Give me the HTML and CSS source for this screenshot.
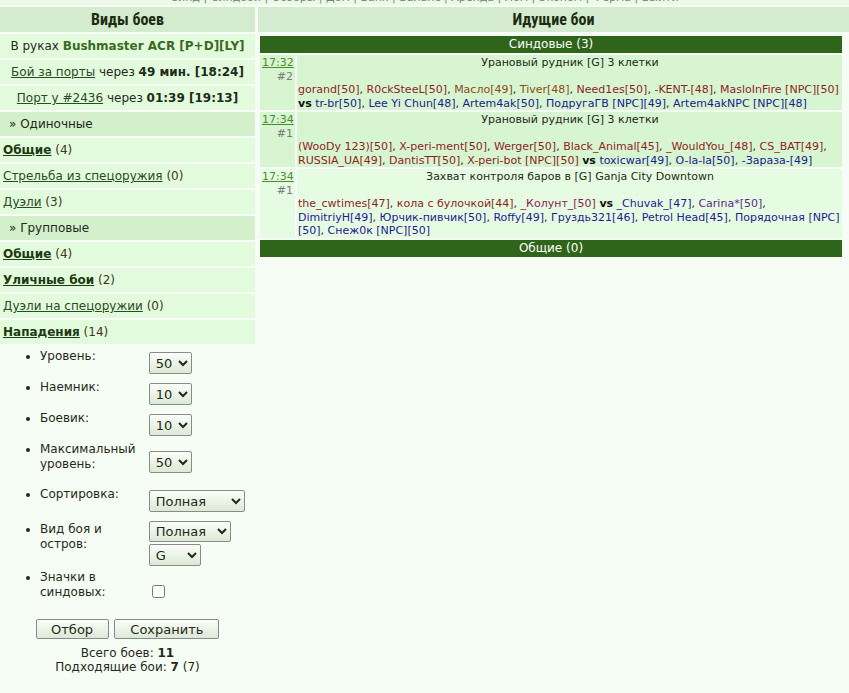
FILE: index.html
```html
<!DOCTYPE html>
<html lang="ru">
<head>
  <meta charset="UTF-8" />
  <title>Бои</title>
  <link rel="stylesheet" href="styles.css">
</head>
<body>
  <div class="topnav">
    <a href="#">Синд</a> | <a href="#">Синдбои</a> | <a href="#">Обзоры</a> | <a href="#">Дом</a> | <a href="#">Банк</a> | <a href="#">Баланс</a> | <a href="#">Аренда</a> | <a href="#">Лом</a> | <a href="#">Эконом</a> | <a href="#">Ферма</a> | <a href="#">Выйти</a>
  </div>

  <div class="layout">
    <!-- left: battle types -->
    <div class="side">
      <div class="col-head">Виды боев</div>
      <div class="row row-c">В руках <b class="weapon">Bushmaster ACR [P+D][LY]</b></div>
      <div class="row row-c"><a href="#">Бой за порты</a> через <b>49 мин. [18:24]</b></div>
      <div class="row row-c"><a href="#">Порт у #2436</a> через <b>01:39 [19:13]</b></div>
      <div class="row section">» Одиночные</div>
      <div class="row"><a href="#" class="strong">Общие</a> <span class="cnt">(4)</span></div>
      <div class="row"><a href="#">Стрельба из спецоружия</a> <span class="cnt">(0)</span></div>
      <div class="row"><a href="#">Дуэли</a> <span class="cnt">(3)</span></div>
      <div class="row section">» Групповые</div>
      <div class="row"><a href="#" class="strong">Общие</a> <span class="cnt">(4)</span></div>
      <div class="row"><a href="#" class="strong">Уличные бои</a> <span class="cnt">(2)</span></div>
      <div class="row"><a href="#">Дуэли на спецоружии</a> <span class="cnt">(0)</span></div>
      <div class="row"><a href="#" class="strong">Нападения</a> <span class="cnt">(14)</span></div>

      <ul class="filters">
        <li>
          <span class="lbl">Уровень:</span>
          <span class="ctl"><select class="sel-s"><option>50</option></select></span>
        </li>
        <li>
          <span class="lbl">Наемник:</span>
          <span class="ctl"><select class="sel-s"><option>10</option></select></span>
        </li>
        <li>
          <span class="lbl">Боевик:</span>
          <span class="ctl"><select class="sel-s"><option>10</option></select></span>
        </li>
        <li class="two">
          <span class="lbl">Максимальный уровень:</span>
          <span class="ctl"><select class="sel-s"><option>50</option></select></span>
        </li>
        <li class="sort">
          <span class="lbl">Сортировка:</span>
          <span class="ctl"><select class="sel-l"><option>Полная</option></select></span>
        </li>
        <li class="kind">
          <span class="lbl">Вид боя и остров:</span>
          <span class="ctl ctl-col">
            <select class="sel-m"><option>Полная</option></select>
            <select class="sel-g"><option>G</option></select>
          </span>
        </li>
        <li class="icons">
          <span class="lbl">Значки в синдовых:</span>
          <span class="ctl"><input type="checkbox" /></span>
        </li>
      </ul>

      <div class="btns">
        <button class="btn btn-pick">Отбор</button>
        <button class="btn btn-save">Сохранить</button>
      </div>
      <div class="totals">
        Всего боев: <b>11</b><br>
        Подходящие бои: <b>7</b> (7)
      </div>
    </div>

    <!-- right: running battles -->
    <div class="main">
      <div class="col-head">Идущие бои</div>
      <div class="battles">
        <div class="group">Синдовые (3)</div>

        <div class="battle">
          <div class="when"><a href="#">17:32</a><br><span class="num">#2</span></div>
          <div class="info">
            <div class="title">Урановый рудник [G] 3 клетки</div>
            <div class="teams">
              <span class="t1">gorand[50]</span>, <span class="t1">R0ckSteeL[50]</span>, <span class="t1b">Масло[49]</span>, <span class="t1b">Tiver[48]</span>, <span class="t1">Need1es[50]</span>, <span class="t1">-KENT-[48]</span>, <span class="t1">MasloInFire [NPC][50]</span>
              <b>vs</b> <span class="t2">tr-br[50]</span>, <span class="t2">Lee Yi Chun[48]</span>, <span class="t2">Artem4ak[50]</span>, <span class="t2">ПодругаГВ [NPC][49]</span>, <span class="t2">Artem4akNPC [NPC][48]</span>
            </div>
          </div>
        </div>

        <div class="battle">
          <div class="when"><a href="#">17:34</a><br><span class="num">#1</span></div>
          <div class="info">
            <div class="title">Урановый рудник [G] 3 клетки</div>
            <div class="teams">
              <span class="t1">(WooDy 123)[50]</span>, <span class="t1">X-peri-ment[50]</span>, <span class="t1">Werger[50]</span>, <span class="t1">Black_Animal[45]</span>, <span class="t1">_WouldYou_[48]</span>, <span class="t1">CS_BAT[49]</span>, <span class="t1">RUSSIA_UA[49]</span>, <span class="t1">DantisTT[50]</span>, <span class="t1">X-peri-bot [NPC][50]</span> <b>vs</b> <span class="t2">toxicwar[49]</span>, <span class="t2">O-la-la[50]</span>, <span class="t2">-Зараза-[49]</span>
            </div>
          </div>
        </div>

        <div class="battle battle-lt">
          <div class="when"><a href="#">17:34</a><br><span class="num">#1</span></div>
          <div class="info">
            <div class="title">Захват контроля баров в [G] Ganja City Downtown</div>
            <div class="teams">
              <span class="t1">the_cwtimes[47]</span>, <span class="t1">кола с булочкой[44]</span>, <span class="t1p">_Колунт_[50]</span> <b>vs</b> <span class="t2">_Chuvak_[47]</span>, <span class="t2p">Carina*[50]</span>, <span class="t2">DimitriyH[49]</span>, <span class="t2">Юрчик-пивчик[50]</span>, <span class="t2">Roffy[49]</span>, <span class="t2">Груздь321[46]</span>, <span class="t2">Petrol Head[45]</span>, <span class="t2">Порядочная [NPC][50]</span>, <span class="t2">Снеж0к [NPC][50]</span>
            </div>
          </div>
        </div>

        <div class="group">Общие (0)</div>
      </div>
    </div>
  </div>
</body>
</html>
```

FILE: styles.css
```css
body {
  margin: 0;
  background-color: #f6fdf4;
  color: #1e2a18;
  font-family: "DejaVu Sans", Verdana, sans-serif;
  font-size: 12px;
  line-height: 15px;
}
a {
  color: #2a4a24;
}

.topnav {
  height: 14px;
  margin-top: -9px;
  margin-bottom: 2px;
  line-height: 14px;
  font-size: 11px;
  text-align: center;
  color: #6a9a62;
  background-color: #eef8ea;
}
.topnav a {
  color: #5e9656;
  text-decoration: none;
}

.layout {
  display: flex;
  gap: 3px;
}
.side {
  width: 255px;
  flex-shrink: 0;
}
.main {
  flex: 1;
}

.col-head {
  height: 25px;
  line-height: 25px;
  background-color: #d4ebcf;
  text-align: center;
  font-family: "Liberation Sans Narrow", "Roboto Condensed", "Liberation Sans", sans-serif;
  font-weight: bold;
  font-size: 16px;
  color: #1c2c10;
}

/* left list */
.row {
  height: 24px;
  line-height: 24px;
  margin-top: 2px;
  padding-left: 3px;
  background-color: #e3fbdd;
  white-space: nowrap;
}
.row-c {
  text-align: center;
  padding-left: 0;
}
.section {
  padding-left: 9px;
  background-color: #d3efcb;
}
.weapon {
  color: #3b6a1e;
}
.strong {
  font-weight: bold;
  color: #1c3a10;
}
.cnt {
  color: #40381c;
}

/* filters */
.filters {
  margin: 5px 0 0 0;
  padding-left: 40px;
}
.filters li {
  margin-bottom: 6px;
}
.filters li > * {
  display: inline-block;
  vertical-align: top;
}
.lbl {
  width: 105px;
}
.ctl {
  margin-top: 3px;
}
.two {
  margin-bottom: 14px !important;
}
.two .ctl {
  margin-top: 9px;
}
.sort {
  margin-bottom: 10px !important;
}
.kind {
  margin-bottom: 2px !important;
}
.kind .ctl {
  margin-top: -1px;
}
.icons .ctl {
  margin-top: 15px;
}
.ctl-col select {
  display: block;
  margin-bottom: 2px;
}
select, .btn {
  font-family: "DejaVu Sans", Verdana, sans-serif;
  font-size: 13px;
  color: #1f2a18;
  border: 1px solid #8a8a8a;
  border-radius: 2px;
  background: linear-gradient(#fbfdf9, #dce9d6);
}
select {
  height: 22px;
  padding: 0 2px;
}
.sel-s { width: 43px; }
.sel-l { width: 96px; }
.sel-m { width: 82px; }
.sel-g { width: 52px; }
.ctl-col .sel-m { height: 21px; }
.filters input[type="checkbox"] {
  margin: 0 0 0 3px;
  width: 13px;
  height: 13px;
}

.btns {
  margin-top: 17px;
  text-align: center;
}
.btn {
  height: 20px;
  padding: 0;
  margin: 0 1px;
  cursor: pointer;
}
.btn-pick { width: 73px; }
.btn-save { width: 105px; }

.totals {
  margin-top: 7px;
  text-align: center;
  line-height: 14px;
}

/* running battles */
.battles {
  margin: 4px 7px 0 2px;
  display: flex;
  flex-direction: column;
  gap: 2px;
  font-size: 11px;
  line-height: 13.5px;
}
.group {
  height: 17px;
  line-height: 17px;
  background-color: #2f651b;
  color: #ffffff;
  text-align: center;
  font-size: 12px;
}
.battle {
  display: flex;
  gap: 2px;
}
.when, .info {
  background-color: #d8f5d1;
  padding-top: 1px;
}
.battle-lt .when, .battle-lt .info {
  background-color: #e6fce2;
}
.when {
  width: 31px;
  padding-right: 2px;
  padding-left: 2px;
  text-align: right;
}
.when a {
  color: #4b8c2a;
}
.num {
  color: #7a7a7a;
}
.info {
  flex: 1;
  padding-left: 1px;
}
.title {
  text-align: center;
  margin-bottom: 13.5px;
}
.t1 { color: #8c1f1f; }
.t1b { color: #8c4a18; }
.t1p { color: #8c1a5a; }
.t2 { color: #1c2090; }
.t2p { color: #5a2a8a; }
.teams b {
  color: #111;
}
```
